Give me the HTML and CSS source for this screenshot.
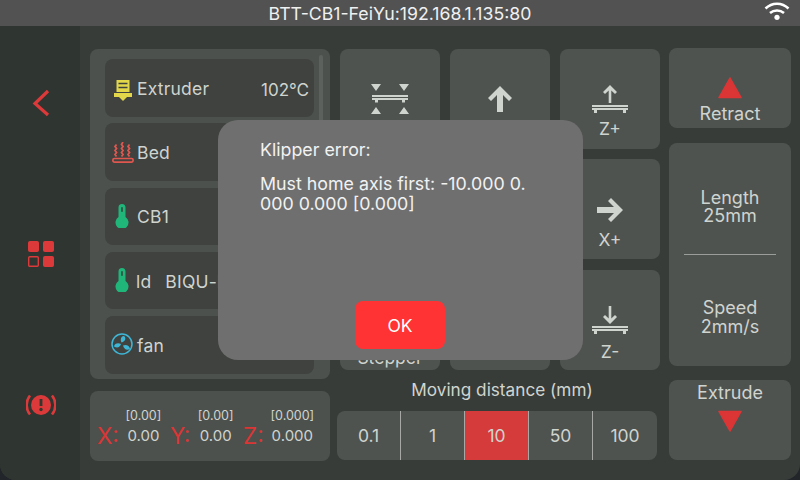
FILE: index.html
```html
<!DOCTYPE html>
<html lang="en">
<head>
<meta charset="utf-8">
<title>KlipperScreen</title>
<link rel="stylesheet" href="styles.css">
</head>
<body>
<div class="screen">
  <header class="topbar">
    <span class="title">BTT-CB1-FeiYu:192.168.1.135:80</span>
    <svg class="wifi" viewBox="0 0 26 20"><path d="M1.500 7.500C8 1 18 1 24.500 7.500M6 12C10 8.500 16 8.500 20 12" fill="none" stroke="#fff" stroke-width="2.500"/><circle cx="13" cy="16.300" r="2.600" fill="#fff"/></svg>
  </header>
  <div class="body">
    <nav class="sidebar">
      <svg class="nav-back" viewBox="0 0 18 28"><path d="M16 2L3 14.500L16 26" fill="none" stroke="#dc3a3a" stroke-width="3.200"/></svg>
      <svg class="nav-menu" viewBox="0 0 26 26"><rect width="11" height="11" x="0" y="0" rx="2" fill="#dc3a3a"/><rect width="11" height="11" x="15" y="0" rx="2" fill="#dc3a3a"/><rect width="9.600" height="9.600" x=".7" y="15.700" rx="1" fill="none" stroke="#dc3a3a" stroke-width="1.400"/><rect width="11" height="11" x="15" y="15" rx="2" fill="#dc3a3a"/></svg>
      <svg class="nav-stop" viewBox="0 0 30 22"><circle cx="15" cy="11" r="10" fill="#dc3a3a"/><path d="M15 5v7" stroke="#33382f" stroke-width="2.800"/><circle cx="15" cy="15.500" r="1.700" fill="#33382f"/><path d="M4 1.500C-.5 7-.5 15 4 20.500M26 1.500C30.500 7 30.500 15 26 20.500" fill="none" stroke="#dc3a3a" stroke-width="2.600"/></svg>
    </nav>
    <main class="content">
      <section class="left">
        <div class="panel sensors">
          <div class="sensor-list">
            <div class="sensor">
              <svg class="ico ico-ext" viewBox="0 0 18 21"><rect x="2.500" y="0" width="13" height="12" fill="#e2d64a"/><path d="M4.500 3.500h9M4.500 7.500h9" stroke="#3f423f" stroke-width="1.500"/><path d="M0 13h18v4h-5l-4 4-4-4H0z" fill="#e2d64a"/></svg>
              <span class="name">Extruder</span><span class="val">102℃</span>
            </div>
            <div class="sensor">
              <svg class="ico ico-bed" viewBox="0 0 22 21"><path d="M4.500 2.500l-1.500 2 1.500 2-1.500 2 1.500 2-1.500 2 1.500 2M11 0l-1.500 2.500 1.500 2-1.500 2 1.500 2-1.500 2 1.500 2-1.500 2M17.500 2.500l-1.500 2 1.500 2-1.500 2 1.500 2-1.500 2 1.500 2" fill="none" stroke="#e0574f" stroke-width="1.800"/><rect x=".9" y="16.500" width="20.200" height="3.600" rx="1.500" fill="none" stroke="#e0574f" stroke-width="1.700"/></svg>
              <span class="name">Bed</span>
            </div>
            <div class="sensor">
              <svg class="ico ico-thermo" viewBox="0 0 14 24"><path d="M3.500 13V3.500a3.500 3.500 0 0 1 7 0V13a6.500 6.500 0 1 1-7 0z" fill="#20b67a"/><rect x="6.200" y="3" width="1.600" height="5" rx=".8" fill="#2f4a3c"/></svg>
              <span class="name">CB1</span>
            </div>
            <div class="sensor">
              <svg class="ico ico-thermo" viewBox="0 0 14 24"><path d="M3.500 13V3.500a3.500 3.500 0 0 1 7 0V13a6.500 6.500 0 1 1-7 0z" fill="#20b67a"/><rect x="6.200" y="3" width="1.600" height="5" rx=".8" fill="#2f4a3c"/></svg>
              <span class="name name-tight">ld</span><span class="sub">BIQU-kk</span>
            </div>
            <div class="sensor">
              <svg class="ico ico-fan" viewBox="0 0 22 22"><circle cx="11" cy="11" r="10" fill="none" stroke="#3fb6d6" stroke-width="1.500"/><path d="M10.500 9.500C9 6.500 10 3 13 3c2.500 2 1.500 5.500-2.500 6.500zM10 11C7 9.500 3.500 10.500 3 13.500c3 2 6 1 7-2.500zM12 12.500C13 16 15.500 18 19 16c-.5-3.500-4-5-7-3.500z" fill="#3fb6d6"/></svg>
              <span class="name">fan</span>
            </div>
          </div>
          <div class="scrollbar"></div>
        </div>
        <div class="panel position">
          <div class="axis"><span class="letter">X:</span><div class="coords"><span class="target">[0.00]</span><span class="cur">0.00</span></div></div>
          <div class="axis"><span class="letter">Y:</span><div class="coords"><span class="target">[0.00]</span><span class="cur">0.00</span></div></div>
          <div class="axis axis-z"><span class="letter">Z:</span><div class="coords"><span class="target">[0.000]</span><span class="cur">0.000</span></div></div>
        </div>
      </section>
      <section class="mid">
        <div class="pad">
          <div class="btn btn-top"><svg class="ico-home" viewBox="0 0 38 30"><path d="M0 0h10l-5 7zM28 0h10l-5 7zM0 30h10l-5-7zM28 30h10l-5-7z" fill="#d0d4cf"/><rect x="1" y="11" width="36" height="2" fill="#d0d4cf"/><rect x="1" y="14" width="36" height="2" fill="#d0d4cf"/><rect x="4" y="16" width="3" height="2.500" fill="#d0d4cf"/><rect x="31" y="16" width="3" height="2.500" fill="#d0d4cf"/></svg></div>
          <div class="btn"><svg class="ico-arrow" viewBox="0 0 24 26"><path d="M12 0L24 12l-3 3-6-6v17H9V9l-6 6-3-3z" fill="#d0d4cf"/></svg></div>
          <div class="btn btn-z"><svg class="ico-z" viewBox="0 0 36 28"><path d="M18 0l7 7-2 2-3.700-3.500V18h-2.600V5.500L13 9l-2-2z" fill="#d0d4cf"/><rect y="20" width="36" height="2" fill="#d0d4cf"/><rect y="23" width="36" height="2" fill="#d0d4cf"/><rect x="2" y="25" width="3" height="3" fill="#d0d4cf"/><rect x="31" y="25" width="3" height="3" fill="#d0d4cf"/></svg><span class="lbl">Z+</span></div>
          <div class="btn"></div>
          <div class="btn"></div>
          <div class="btn btn-x"><svg class="ico-arrow-r" viewBox="0 0 26 24"><path d="M26 12L14 24l-3-3 6-6H0V9h17l-6-6 3-3z" fill="#d0d4cf"/></svg><span class="lbl">X+</span></div>
          <div class="btn btn-stepper"><span class="lbl">Stepper</span></div>
          <div class="btn"></div>
          <div class="btn btn-z btn-zdown"><svg class="ico-z" viewBox="0 0 36 28"><path d="M18 18l7-7-2-2-3.700 3.500V0h-2.600v12.500L13 9l-2 2z" fill="#d0d4cf"/><rect y="20" width="36" height="2" fill="#d0d4cf"/><rect y="23" width="36" height="2" fill="#d0d4cf"/><rect x="2" y="25" width="3" height="3" fill="#d0d4cf"/><rect x="31" y="25" width="3" height="3" fill="#d0d4cf"/></svg><span class="lbl">Z-</span></div>
        </div>
        <div class="dist-title">Moving distance (mm)</div>
        <div class="seg">
          <div class="seg-item">0.1</div>
          <div class="seg-item">1</div>
          <div class="seg-item active">10</div>
          <div class="seg-item">50</div>
          <div class="seg-item">100</div>
        </div>
      </section>
      <section class="right">
        <div class="rbtn"><svg class="tri" viewBox="0 0 24 22"><path d="M12 1L23 20.500H1z" fill="#dc3535" stroke="#dc3535" stroke-width="1.500" stroke-linejoin="round"/></svg><span class="lbl-r">Retract</span></div>
        <div class="rmid">
          <div class="rmid-cell cell-length"><span>Length</span><span>25mm</span></div>
          <div class="rule"></div>
          <div class="rmid-cell cell-speed"><span>Speed</span><span>2mm/s</span></div>
        </div>
        <div class="rbtn rbtn-ext"><span class="lbl-r">Extrude</span><svg class="tri" viewBox="0 0 24 22"><path d="M12 21L23 1.500H1z" fill="#dc3535" stroke="#dc3535" stroke-width="1.500" stroke-linejoin="round"/></svg></div>
      </section>
    </main>
  </div>
  <div class="dialog">
    <p class="dlg-title">Klipper error:</p>
    <p class="dlg-msg">Must home axis first: -10.000 0.<br>000 0.000 [0.000]</p>
    <button class="ok">OK</button>
  </div>
</div>
</body>
</html>
```
FILE: styles.css
```css
* { box-sizing: border-box; }
html, body { margin: 0; padding: 0; background: #22262a; }
body { width: 800px; height: 480px; overflow: hidden; font-family: Inter, "Noto Sans", sans-serif; color: #d0d4cf; }
.screen { position: relative; width: 800px; height: 480px; display: flex; flex-direction: column; border-radius: 0 0 16px 16px; overflow: hidden; background: #383c38; }
.topbar { height: 26px; flex: none; background: #525252; display: flex; align-items: center; justify-content: center; position: relative; }
.title { color: #f0f0f0; font-size: 17.700px; }
.wifi { position: absolute; right: 10px; top: 1px; width: 26px; height: 20px; }
.body { flex: 1; display: flex; min-height: 0; }
.sidebar { width: 80px; flex: none; background: #2f3530; position: relative; }
.nav-back { position: absolute; left: 32px; top: 63px; width: 18px; height: 28px; }
.nav-menu { position: absolute; left: 28px; top: 215px; width: 26px; height: 26px; }
.nav-stop { position: absolute; left: 26px; top: 368px; width: 30px; height: 22px; }
.content { flex: 1; display: flex; padding-top: 22px; padding-left: 10px; }
.left { width: 240px; flex: none; display: flex; flex-direction: column; gap: 12px; padding-top: 1px; }
.panel { background: #4d514d; border-radius: 8px; }
.sensors { height: 330px; display: flex; padding: 10px 7px 6px 15px; gap: 5px; }
.sensor-list { width: 210px; display: flex; flex-direction: column; gap: 6.750px; }
.sensor { height: 57.500px; flex: none; background: #3f423f; border-radius: 8px; display: flex; align-items: center; font-size: 17.500px; letter-spacing: .2px; position: relative; padding: 1px 0 0 32px; }
.ico { position: absolute; }
.ico-ext { left: 9px; top: 21px; width: 18px; height: 21px; }
.ico-bed { left: 7px; top: 19px; width: 22px; height: 21px; }
.ico-thermo { left: 10px; top: 16px; width: 14px; height: 24px; }
.ico-fan { left: 6px; top: 17px; width: 22px; height: 22px; }
.name-tight { margin-left: -1px; }
.sub { margin-left: 14px; white-space: nowrap; }
.val { margin-left: auto; margin-right: 5px; margin-top: 4px; font-size: 17px; letter-spacing: 0; }
.scrollbar { width: 4px; height: 300px; background: #5d615d; border-radius: 2px; margin-top: -4px; }
.position { height: 70px; display: grid; grid-template-columns: 73px 73px 1fr; padding: 17px 0 0 7px; }
.axis { display: flex; align-items: flex-end; height: 40px; }
.letter { color: #dc3535; font-size: 22.500px; line-height: 26px; margin-bottom: -1px; }
.coords { flex: 1; display: flex; flex-direction: column; align-items: center; margin-right: 2px; }
.axis-z .coords { margin-right: 9px; }
.target { font-size: 12.500px; line-height: 16px; margin-bottom: 2px; }
.cur { font-size: 15px; line-height: 20px; margin-bottom: 2px; }
.mid { width: 320px; flex: none; margin-left: 7px; display: flex; flex-direction: column; align-items: stretch; padding-top: 1px; }
.pad { display: grid; grid-template-columns: repeat(3, 100px); grid-template-rows: 100px 101px 100px; column-gap: 10px; row-gap: 10px; padding-left: 3px; }
.btn { height: 100px; background: #4f534f; border-radius: 8px; display: flex; flex-direction: column; align-items: center; justify-content: center; }
.lbl { font-size: 17.500px; line-height: 22px; }
.btn-top { justify-content: flex-start; padding-top: 35px; }
.btn-z { justify-content: flex-start; padding-top: 36px; gap: 5px; }
.btn-zdown { gap: 7px; }
.btn-x { justify-content: flex-start; padding-top: 39px; gap: 7px; }
.btn-stepper { justify-content: flex-end; padding-bottom: 1px; }
.ico-home { width: 38px; height: 30px; }
.ico-arrow { width: 24px; height: 26px; }
.ico-arrow-r { width: 26px; height: 24px; }
.ico-z { width: 36px; height: 28px; }
.dist-title { height: 41px; padding: 0 0 2px 10px; display: flex; align-items: center; justify-content: center; font-size: 17.200px; }
.seg { display: flex; height: 49px; border-radius: 8px; overflow: hidden; background: #4f534f; }
.seg-item { width: 64px; display: flex; align-items: center; justify-content: center; font-size: 17.500px; border-right: 1px solid #a5a8a5; }
.seg-item:last-child { border-right: 0; }
.seg-item.active { background: #d63b3b; }
.right { width: 122px; flex: none; margin-left: 12px; display: flex; flex-direction: column; }
.rbtn { height: 80px; background: #4f534f; border-radius: 8px; display: flex; flex-direction: column; align-items: center; padding-top: 29px; gap: 4px; flex: none; }
.rbtn-ext { margin-top: 14px; padding-top: 2px; gap: 6px; }
.tri { width: 24px; height: 22px; flex: none; }
.lbl-r { font-size: 18px; line-height: 22px; }
.rmid { height: 223px; margin-top: 15px; background: #4f534f; border-radius: 8px; display: flex; flex-direction: column; flex: none; padding: 0 15px; }
.rmid-cell { flex: 0 0 111px; display: flex; flex-direction: column; align-items: center; justify-content: center; font-size: 18px; line-height: 18.500px; }
.cell-length { padding-top: 17px; }
.cell-speed { padding-top: 14px; }
.rule { height: 1px; background: #9a9d9a; flex: none; }
.dialog { position: absolute; left: 218px; top: 120px; width: 365px; height: 240px; background: #6f6f6f; border-radius: 20px; padding: 20px 20px 0 42px; color: #f2f2f2; font-size: 17.800px; }
.dlg-title { margin: 0 0 14px; line-height: 20px; }
.dlg-msg { margin: 0; line-height: 20px; }
.ok { position: absolute; left: 137px; top: 181px; width: 90px; height: 48px; border: 0; border-radius: 8px; background: #ff3333; color: #fff; font: inherit; font-size: 17.500px; }
```
